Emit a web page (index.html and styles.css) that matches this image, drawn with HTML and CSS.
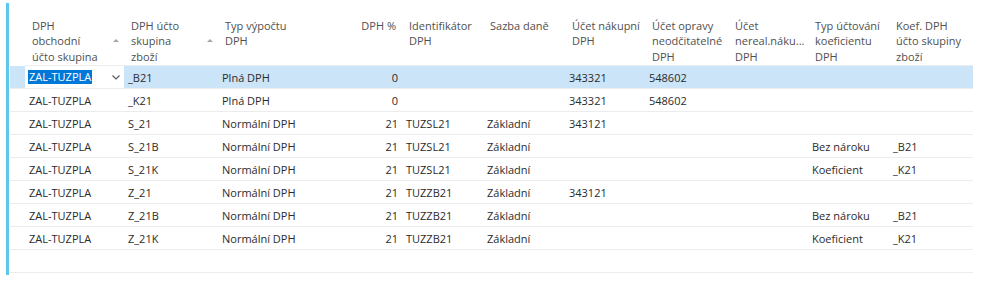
FILE: index.html
```html
<!DOCTYPE html>
<html lang="cs">
<head>
    <meta charset="UTF-8">
    <meta name="viewport" content="width=device-width, initial-scale=1.0">
    <title>Nastavení DPH</title>
    <link rel="stylesheet" href="styles.css">
</head>
<body>

<div class="panel">
    <table class="lines">
        <colgroup>
            <col class="w-gutter">
            <col class="w1"><col class="w2"><col class="w3"><col class="w4">
            <col class="w5"><col class="w6"><col class="w7"><col class="w8">
            <col class="w9"><col class="w10"><col class="w11">
        </colgroup>
        <thead>
            <tr>
                <th class="gutter"></th>
                <th><div class="head"><span>DPH<br>obchodní<br>účto skupina</span><span class="sort"></span></div></th>
                <th><div class="head"><span>DPH účto<br>skupina<br>zboží</span><span class="sort"></span></div></th>
                <th>Typ výpočtu<br>DPH</th>
                <th class="num">DPH %</th>
                <th>Identifikátor<br>DPH</th>
                <th>Sazba daně</th>
                <th>Účet nákupní<br>DPH</th>
                <th>Účet opravy<br>neodčitatelné<br>DPH</th>
                <th>Účet<br>nereal.náku...<br>DPH</th>
                <th>Typ účtování<br>koeficientu<br>DPH</th>
                <th>Koef. DPH<br>účto skupiny<br>zboží</th>
            </tr>
        </thead>
        <tbody>
            <tr class="selected">
                <td class="gutter"></td>
                <td class="editing"><div class="edit"><span class="mark">ZAL-TUZPLA</span><svg width="8" height="5" viewBox="0 0 8 5"><path d="M0.5 0.5 L4 4 L7.5 0.5" fill="none" stroke="#555" stroke-width="1.1"/></svg></div></td>
                <td>_B21</td><td>Plná DPH</td><td class="num">0</td><td></td><td></td>
                <td>343321</td><td>548602</td><td></td><td></td><td></td>
            </tr>
            <tr>
                <td class="gutter"></td>
                <td>ZAL-TUZPLA</td><td>_K21</td><td>Plná DPH</td><td class="num">0</td><td></td><td></td>
                <td>343321</td><td>548602</td><td></td><td></td><td></td>
            </tr>
            <tr>
                <td class="gutter"></td>
                <td>ZAL-TUZPLA</td><td>S_21</td><td>Normální DPH</td><td class="num">21</td><td>TUZSL21</td><td>Základní</td>
                <td>343121</td><td></td><td></td><td></td><td></td>
            </tr>
            <tr>
                <td class="gutter"></td>
                <td>ZAL-TUZPLA</td><td>S_21B</td><td>Normální DPH</td><td class="num">21</td><td>TUZSL21</td><td>Základní</td>
                <td></td><td></td><td></td><td>Bez nároku</td><td>_B21</td>
            </tr>
            <tr>
                <td class="gutter"></td>
                <td>ZAL-TUZPLA</td><td>S_21K</td><td>Normální DPH</td><td class="num">21</td><td>TUZSL21</td><td>Základní</td>
                <td></td><td></td><td></td><td>Koeficient</td><td>_K21</td>
            </tr>
            <tr>
                <td class="gutter"></td>
                <td>ZAL-TUZPLA</td><td>Z_21</td><td>Normální DPH</td><td class="num">21</td><td>TUZZB21</td><td>Základní</td>
                <td>343121</td><td></td><td></td><td></td><td></td>
            </tr>
            <tr>
                <td class="gutter"></td>
                <td>ZAL-TUZPLA</td><td>Z_21B</td><td>Normální DPH</td><td class="num">21</td><td>TUZZB21</td><td>Základní</td>
                <td></td><td></td><td></td><td>Bez nároku</td><td>_B21</td>
            </tr>
            <tr>
                <td class="gutter"></td>
                <td>ZAL-TUZPLA</td><td>Z_21K</td><td>Normální DPH</td><td class="num">21</td><td>TUZZB21</td><td>Základní</td>
                <td></td><td></td><td></td><td>Koeficient</td><td>_K21</td>
            </tr>
            <tr class="empty">
                <td class="gutter"></td>
                <td></td><td></td><td></td><td></td><td></td><td></td>
                <td></td><td></td><td></td><td></td><td></td>
            </tr>
        </tbody>
    </table>
</div>

</body>
</html>
```

FILE: styles.css
```css
body {
    font-family: "Open Sans", "Noto Sans", Arial, sans-serif;
    font-size: 11px;
    background-color: #fff;
    color: #2b2b2b;
    margin: 0;
    padding: 3px 0 0 6px;
}

.panel {
    border-left: 3px solid #5cc8ec;
    padding: 0 0 2px 1px;
    width: 964px;
}

.lines {
    table-layout: fixed;
    border-collapse: collapse;
    width: 963px;
}

.w-gutter { width: 15px; }
.w1 { width: 99px; }
.w2 { width: 94px; }
.w3 { width: 117px; }
.w4 { width: 67px; }
.w5 { width: 81px; }
.w6 { width: 82px; }
.w7 { width: 80px; }
.w8 { width: 83px; }
.w9 { width: 80px; }
.w10 { width: 81px; }
.w11 { width: 84px; }

th {
    font-weight: normal;
    color: #505050;
    text-align: left;
    vertical-align: top;
    line-height: 15.3px;
    padding: 15px 2px 1px 7px;
    height: 46px;
    border-bottom: 1px solid #ececec;
    white-space: nowrap;
}

th.gutter {
    border-bottom: none;
}

th.num {
    text-align: right;
    padding-right: 6px;
}

.head {
    display: flex;
    align-items: center;
    justify-content: space-between;
    padding-right: 2px;
}

.sort {
    width: 0;
    height: 0;
    border-left: 3px solid transparent;
    border-right: 3px solid transparent;
    border-bottom: 3px solid #a6a6a6;
    margin-right: 1px;
}

td {
    height: 22px;
    padding: 0 4px;
    border-bottom: 1px solid #ececec;
    white-space: nowrap;
    overflow: hidden;
}

td.num {
    text-align: right;
}

td.gutter {
    padding: 0;
}

tr.selected td {
    background-color: #cce4f7;
}

tr.selected td.editing {
    background-color: #fff;
    padding-left: 3px;
}

.edit {
    display: flex;
    align-items: center;
    justify-content: space-between;
}

.mark {
    background-color: #0078d7;
    color: #fff;
    padding: 0 1px;
    line-height: 14px;
}
```
